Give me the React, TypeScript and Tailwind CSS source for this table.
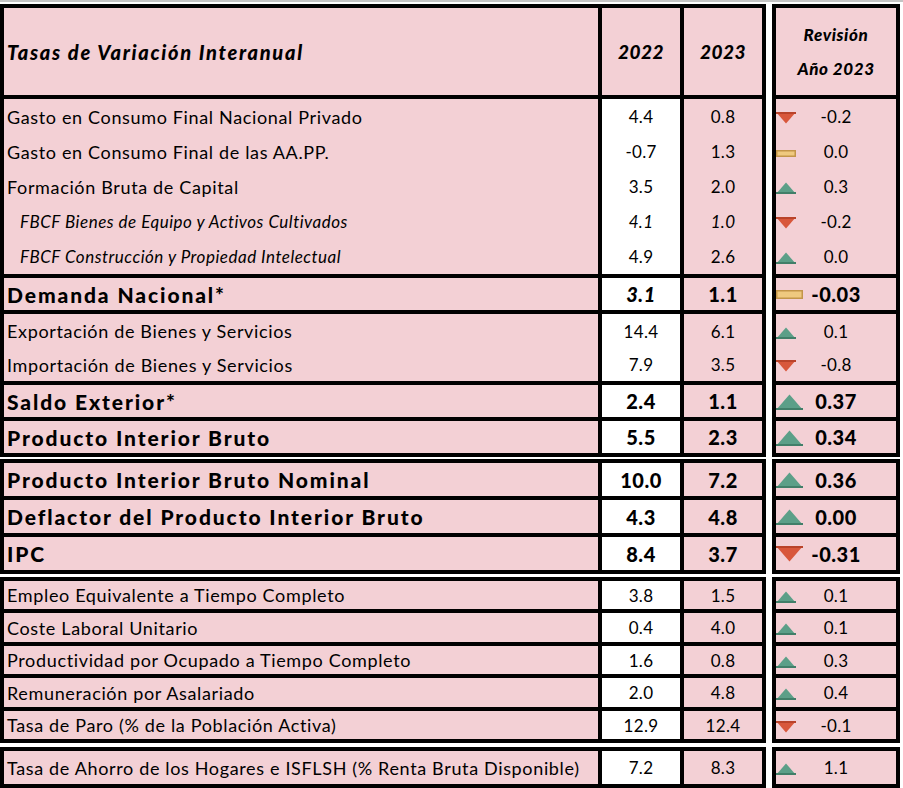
type Trend = 'up' | 'down' | 'flat';
type Kind = 'normal' | 'sub' | 'bold';

type Row = {
  label: string;
  a: string;
  b: string;
  rev: string;
  trend: Trend;
  h: string;
  kind: Kind;
  italicA?: boolean;
  italicB?: boolean;
};

type Block = { gap: string; groups: Row[][] };

const blocks: Block[] = [
  {
    gap: 'mt-0',
    groups: [
      [
        { label: 'Gasto en Consumo Final Nacional Privado', a: '4.4', b: '0.8', rev: '-0.2', trend: 'down', h: 'h-[35px]', kind: 'normal' },
        { label: 'Gasto en Consumo Final de las AA.PP.', a: '-0.7', b: '1.3', rev: '0.0', trend: 'flat', h: 'h-[35px]', kind: 'normal' },
        { label: 'Formación Bruta de Capital', a: '3.5', b: '2.0', rev: '0.3', trend: 'up', h: 'h-[35px]', kind: 'normal' },
        { label: 'FBCF Bienes de Equipo y Activos Cultivados', a: '4.1', b: '1.0', rev: '-0.2', trend: 'down', h: 'h-[35px]', kind: 'sub', italicA: true, italicB: true },
        { label: 'FBCF Construcción y Propiedad Intelectual', a: '4.9', b: '2.6', rev: '0.0', trend: 'up', h: 'h-[35px]', kind: 'sub' },
      ],
      [{ label: 'Demanda Nacional*', a: '3.1', b: '1.1', rev: '-0.03', trend: 'flat', h: 'h-[32px]', kind: 'bold', italicA: true }],
      [
        { label: 'Exportación de Bienes y Servicios', a: '14.4', b: '6.1', rev: '0.1', trend: 'up', h: 'h-[34px]', kind: 'normal' },
        { label: 'Importación de Bienes y Servicios', a: '7.9', b: '3.5', rev: '-0.8', trend: 'down', h: 'h-[33px]', kind: 'normal' },
      ],
      [{ label: 'Saldo Exterior*', a: '2.4', b: '1.1', rev: '0.37', trend: 'up', h: 'h-[32px]', kind: 'bold' }],
      [{ label: 'Producto Interior Bruto', a: '5.5', b: '2.3', rev: '0.34', trend: 'up', h: 'h-[32px]', kind: 'bold' }],
    ],
  },
  {
    gap: 'mt-[2px]',
    groups: [
      [{ label: 'Producto Interior Bruto Nominal', a: '10.0', b: '7.2', rev: '0.36', trend: 'up', h: 'h-[33px]', kind: 'bold' }],
      [{ label: 'Deflactor del Producto Interior Bruto', a: '4.3', b: '4.8', rev: '0.00', trend: 'up', h: 'h-[33px]', kind: 'bold' }],
      [{ label: 'IPC', a: '8.4', b: '3.7', rev: '-0.31', trend: 'down', h: 'h-[33px]', kind: 'bold' }],
    ],
  },
  {
    gap: 'mt-[3px]',
    groups: [
      [{ label: 'Empleo Equivalente a Tiempo Completo', a: '3.8', b: '1.5', rev: '0.1', trend: 'up', h: 'h-[28px]', kind: 'normal' }],
      [{ label: 'Coste Laboral Unitario', a: '0.4', b: '4.0', rev: '0.1', trend: 'up', h: 'h-[29px]', kind: 'normal' }],
      [{ label: 'Productividad por Ocupado a Tiempo Completo', a: '1.6', b: '0.8', rev: '0.3', trend: 'up', h: 'h-[28px]', kind: 'normal' }],
      [{ label: 'Remuneración por Asalariado', a: '2.0', b: '4.8', rev: '0.4', trend: 'up', h: 'h-[29px]', kind: 'normal' }],
      [{ label: 'Tasa de Paro (% de la Población Activa)', a: '12.9', b: '12.4', rev: '-0.1', trend: 'down', h: 'h-[28px]', kind: 'normal' }],
    ],
  },
  {
    gap: 'mt-[4px]',
    groups: [
      [{ label: 'Tasa de Ahorro de los Hogares e ISFLSH (% Renta Bruta Disponible)', a: '7.2', b: '8.3', rev: '1.1', trend: 'up', h: 'h-[33px]', kind: 'normal' }],
    ],
  },
];

function TrendIcon({ trend, big }: { trend: Trend; big: boolean }) {
  const w = big ? 27 : 20;
  if (trend === 'flat') {
    const h = big ? 9 : 7;
    return (
      <svg width={w} height={h} viewBox={`0 0 ${w} ${h}`}>
        <rect x="0.75" y="0.75" width={w - 1.5} height={h - 1.5} fill="#efc97f" stroke="#c39549" strokeWidth="1.5" />
      </svg>
    );
  }
  const h = big ? 16 : 12;
  if (trend === 'up') {
    return (
      <svg width={w} height={h} viewBox={`0 0 ${w} ${h}`}>
        <polygon points={`${w / 2},0.5 ${w},${h} 0,${h}`} fill="#5c9f88" />
        <rect x="0" y={h - 2} width={w} height="2" fill="#417f69" />
      </svg>
    );
  }
  return (
    <svg width={w} height={h} viewBox={`0 0 ${w} ${h}`}>
      <polygon points={`0,0 ${w},0 ${w / 2},${h - 0.5}`} fill="#d8573b" />
      <rect x="0" y="0" width={w} height="2" fill="#b9432a" />
    </svg>
  );
}

function labelClass(kind: Kind) {
  if (kind === 'bold') return 'pl-[3px] text-[21px] font-black tracking-[1.9px]';
  if (kind === 'sub') return 'pl-[16px] text-[17px] italic tracking-[0.5px]';
  return 'pl-[3px] text-[18px] tracking-[0.65px]';
}

function numClass(kind: Kind, italic?: boolean) {
  const size = kind === 'bold' ? 'text-[20px] font-black tracking-[0.5px]' : 'text-[17px] tracking-[0.3px]';
  return `${size} ${italic ? 'italic' : ''}`;
}

function LeftRow({ row }: { row: Row }) {
  return (
    <div className={`flex ${row.h}`}>
      <div className={`flex w-[594px] items-center whitespace-nowrap bg-[#f3d0d5] ${labelClass(row.kind)}`}>{row.label}</div>
      <div className={`flex w-[82px] items-center justify-center border-l-4 border-black bg-white ${numClass(row.kind, row.italicA)}`}>
        {row.a}
      </div>
      <div className={`flex w-[82px] items-center justify-center border-l-4 border-black bg-[#f3d0d5] ${numClass(row.kind, row.italicB)}`}>
        {row.b}
      </div>
    </div>
  );
}

function RightRow({ row }: { row: Row }) {
  const big = row.kind === 'bold';
  return (
    <div className={`grid grid-cols-[30px_1fr_30px] items-center bg-[#f3d0d5] ${row.h}`}>
      <div className={`flex ${big ? 'pt-[1px]' : 'pt-[3px]'}`}>
        <TrendIcon trend={row.trend} big={big} />
      </div>
      <div className={`text-center ${big ? 'text-[20px] font-black tracking-[0.5px]' : 'text-[17px] tracking-[0.3px]'}`}>{row.rev}</div>
      <div />
    </div>
  );
}

export default function App() {
  return (
    <div className="h-[788px] w-[903px] overflow-hidden bg-white font-[Lato,sans-serif] leading-none text-black">
      <div className="h-[2px] bg-[#c4c4c4]" />
      <div className="pt-[2px]">
        {/* Header */}
        <div className="flex">
          <div className="w-[766px] border-4 border-b-0 border-black">
            <div className="flex h-[87px] bg-[#f3d0d5] font-black italic">
              <div className="flex w-[594px] items-center pl-[3px] text-[20px] tracking-[1.7px]">Tasas de Variación Interanual</div>
              <div className="flex w-[82px] items-center justify-center border-l-4 border-black text-[19px] tracking-[0.5px]">2022</div>
              <div className="flex w-[82px] items-center justify-center border-l-4 border-black text-[19px] tracking-[0.5px]">2023</div>
            </div>
          </div>
          <div className="ml-[6px] w-[128px] border-4 border-b-0 border-black">
            <div className="flex h-[87px] flex-col items-center justify-center gap-[17px] bg-[#f3d0d5] text-[17px] font-black italic tracking-[0.6px]">
              <span>Revisión</span>
              <span>Año 2023</span>
            </div>
          </div>
        </div>

        {blocks.map((block, bi) => (
          <div key={bi} className={`flex ${block.gap}`}>
            <div className={`w-[766px] border-4 border-black ${bi === 0 ? 'border-t-0' : ''}`}>
              {block.groups.map((group, gi) => (
                <div key={gi} className={gi === 0 && bi !== 0 ? '' : 'border-t-4 border-black'}>
                  {group.map((row) => (
                    <LeftRow key={row.label} row={row} />
                  ))}
                </div>
              ))}
            </div>
            <div className={`ml-[6px] w-[128px] border-4 border-black ${bi === 0 ? 'border-t-0' : ''}`}>
              {block.groups.map((group, gi) => (
                <div key={gi} className={gi === 0 && bi !== 0 ? '' : 'border-t-4 border-black'}>
                  {group.map((row) => (
                    <RightRow key={row.label} row={row} />
                  ))}
                </div>
              ))}
            </div>
          </div>
        ))}
      </div>
    </div>
  );
}
